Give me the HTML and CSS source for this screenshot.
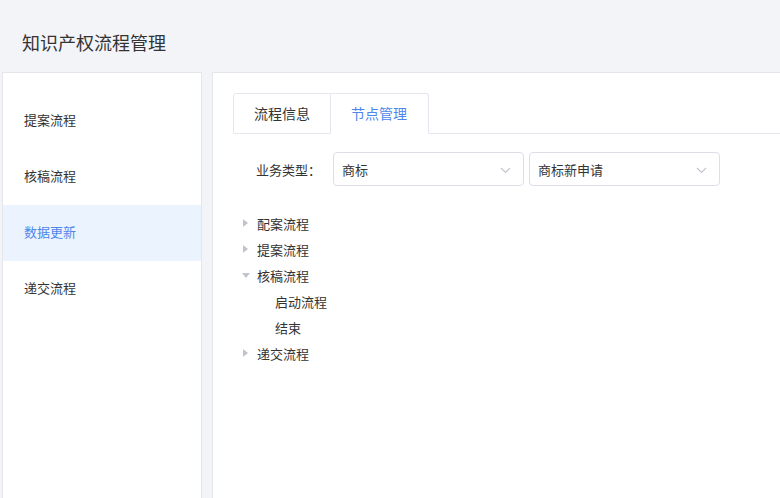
FILE: index.html
```html
<!DOCTYPE html>
<html lang="zh">
<head>
<meta charset="utf-8">
<link rel="stylesheet" href="styles.css">
</head>
<body>
<div class="page">
  <header class="header">知识产权流程管理</header>
  <div class="layout">
    <aside class="side">
      <div class="side-item">提案流程</div>
      <div class="side-item">核稿流程</div>
      <div class="side-item active">数据更新</div>
      <div class="side-item">递交流程</div>
    </aside>
    <main class="main">
      <div class="tabs">
        <div class="tab">流程信息</div>
        <div class="tab tab-active">节点管理</div>
        <div class="tab-rest"></div>
      </div>
      <div class="form-row">
        <label class="form-label">业务类型：</label>
        <div class="select"><span>商标</span><svg class="chev" width="11" height="7" viewBox="0 0 11 7"><path d="M1 1l4.5 4.5L10 1" fill="none" stroke="#c0c4cc" stroke-width="1.1"/></svg></div>
        <div class="select"><span>商标新申请</span><svg class="chev" width="11" height="7" viewBox="0 0 11 7"><path d="M1 1l4.5 4.5L10 1" fill="none" stroke="#c0c4cc" stroke-width="1.1"/></svg></div>
      </div>
      <div class="tree">
        <div class="node"><span class="icon"><span class="tri-right"></span></span><span>配案流程</span></div>
        <div class="node"><span class="icon"><span class="tri-right"></span></span><span>提案流程</span></div>
        <div class="node"><span class="icon"><span class="tri-down"></span></span><span>核稿流程</span></div>
        <div class="node child"><span class="icon"></span><span>启动流程</span></div>
        <div class="node child"><span class="icon"></span><span>结束</span></div>
        <div class="node"><span class="icon"><span class="tri-right"></span></span><span>递交流程</span></div>
      </div>
    </main>
  </div>
</div>
</body>
</html>
```
FILE: styles.css
```css
html, body {
  margin: 0;
  padding: 0;
  background: #f3f4f8;
  overflow: hidden;
}
body {
  font-family: "Noto Sans CJK SC", "Noto Sans", sans-serif;
  color: #333;
  font-size: 13px;
  width: 780px;
  height: 498px;
}
.page {
  width: 820px;
}
.header {
  height: 72px;
  box-sizing: border-box;
  padding-left: 22px;
  line-height: 84px;
  font-size: 18px;
  color: #333;
}
.layout {
  display: flex;
  gap: 10px;
  padding-left: 2px;
}
.side {
  width: 200px;
  height: 460px;
  box-sizing: border-box;
  background: #fff;
  border: 1px solid #e4e6eb;
  padding-top: 20px;
}
.side-item {
  height: 56px;
  line-height: 54px;
  padding-left: 21px;
  color: #333;
}
.side-item.active {
  background: #ebf3fe;
  color: #4f86ec;
}
.main {
  flex: 1;
  height: 460px;
  box-sizing: border-box;
  background: #fff;
  border: 1px solid #e4e6eb;
  padding: 20px 20px;
}
.tabs {
  display: flex;
  height: 41px;
  box-sizing: border-box;
}
.tab {
  height: 41px;
  box-sizing: border-box;
  padding: 0 20px;
  line-height: 39px;
  white-space: nowrap;
  border: 1px solid #e4e7ed;
  color: #333;
  font-size: 14px;
}
.tab:first-child {
  border-radius: 3px 0 0 0;
}
.tab-active {
  border-left: none;
  border-bottom-color: #fff;
  color: #4f86ec;
  border-radius: 0 3px 0 0;
  padding-right: 21px;
}
.tab-rest {
  flex: 1;
  border-bottom: 1px solid #e4e7ed;
}
.form-row {
  display: flex;
  align-items: center;
  margin-top: 18px;
  height: 34px;
}
.form-label {
  width: 100px;
  box-sizing: border-box;
  text-align: right;
  padding-right: 12px;
  color: #333;
  white-space: nowrap;
}
.select {
  width: 191px;
  height: 34px;
  box-sizing: border-box;
  border: 1px solid #dcdfe6;
  border-radius: 4px;
  display: flex;
  align-items: center;
  justify-content: space-between;
  padding: 0 12px 0 8px;
  margin-right: 5px;
  color: #333;
}
.chev {
  margin-top: 3px;
}
.tree {
  margin-top: 24px;
}
.node {
  height: 26px;
  display: flex;
  align-items: center;
  color: #333;
}
.node.child {
  padding-left: 18px;
}
.icon {
  width: 24px;
  height: 26px;
  display: flex;
  align-items: center;
  padding-left: 10px;
  box-sizing: border-box;
}
.tri-right {
  width: 0;
  height: 0;
  border-top: 4px solid transparent;
  border-bottom: 4px solid transparent;
  border-left: 5px solid #c0c4cc;
}
.tri-down {
  width: 0;
  height: 0;
  margin-left: -1px;
  border-left: 4px solid transparent;
  border-right: 4px solid transparent;
  border-top: 5px solid #c0c4cc;
}
```
